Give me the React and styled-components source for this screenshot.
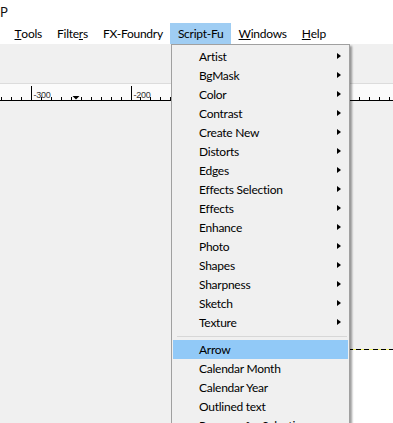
import styled, { createGlobalStyle } from 'styled-components'

const GlobalStyle = createGlobalStyle`
    html, body {
        margin: 0;
        padding: 0;
        background: #fff;
    }
    body {
        font-family: "Segoe UI", Lato, "Liberation Sans", sans-serif;
        font-size: 12px;
        letter-spacing: -0.25px;
        color: #000;
    }
`

const Window = styled.div`
    position: relative;
    width: 393px;
    height: 423px;
    overflow: hidden;
    display: flex;
    flex-direction: column;
`

const TitleBar = styled.div`
    height: 23px;
    display: flex;
    align-items: center;
    padding-top: 1px;
    box-sizing: border-box;
    font-size: 13px;
    color: #111;
`

const MenuBar = styled.div`
    height: 21px;
    display: flex;
    align-items: stretch;
    padding-left: 7px;
    background: #fff;
`

const MenuBarItem = styled.div`
    display: flex;
    align-items: center;
    padding: 0 7.5px;
    background: ${p => (p.$open ? '#9fcdf3' : 'transparent')};
`

const ToolStrip = styled.div`
    height: 39px;
    background: #f0f0f0;
`

const Ruler = styled.div`
    height: 16px;
    background: #fbfbfb;
    border-top: 1px solid #dcdcdc;
    border-bottom: 1px solid #000;

    svg {
        display: block;
    }
`

const Canvas = styled.div`
    flex: 1;
    display: flex;
    background: #f0f0f0;
    padding: 248px 0 0 300px;
`

const ImageArea = styled.div`
    flex: 1;
    background: #fff;
    border-top: 1px solid transparent;
    border-image: repeating-linear-gradient(90deg, #000 0 5px, #f4f46a 5px 8px) 1;
`

const Dropdown = styled.div`
    position: absolute;
    left: 171px;
    top: 44px;
    width: 179px;
    box-sizing: border-box;
    background: #f0f0f0;
    border: 1px solid #a0a0a0;
    padding: 2px 1px;
    box-shadow: 2px 2px 2px rgba(0, 0, 0, 0.38);
`

const Item = styled.div`
    position: relative;
    height: 19px;
    display: flex;
    align-items: center;
    padding-left: 26px;
    white-space: nowrap;
    background: ${p => (p.$hot ? '#91c9f7' : 'transparent')};
`

const SubArrow = styled.span`
    position: absolute;
    right: 7px;
    top: 6px;
    width: 0;
    height: 0;
    border-top: 3.5px solid transparent;
    border-bottom: 3.5px solid transparent;
    border-left: 4px solid #000;
`

const Separator = styled.div`
    height: 8px;
    display: flex;
    align-items: center;
    padding: 0 1px 0 4px;

    &::after {
        content: '';
        flex: 1;
        height: 1px;
        background: #d7d7d7;
    }
`

const menuBar = [
    { label: 'Tools', key: 0 },
    { label: 'Filters', key: 5 },
    { label: 'FX-Foundry', key: -1 },
    { label: 'Script-Fu', key: -1, open: true },
    { label: 'Windows', key: 0 },
    { label: 'Help', key: 0 },
]

const submenus = [
    'Artist', 'BgMask', 'Color', 'Contrast', 'Create New', 'Distorts', 'Edges',
    'Effects Selection', 'Effects', 'Enhance', 'Photo', 'Shapes', 'Sharpness',
    'Sketch', 'Texture',
]

const scripts = ['Arrow', 'Calendar Month', 'Calendar Year', 'Outlined text', 'Pressure for Selection']

function Mnemonic({ label, at }) {
    if (at < 0) return label
    return (
        <>
            {label.slice(0, at)}
            <u>{label[at]}</u>
            {label.slice(at + 1)}
        </>
    )
}

function RulerDrawing() {
    const toX = u => 31 + (u + 300) * 0.995
    const ticks = []
    for (let u = -330; u <= 60; u += 10) {
        const x = Math.round(toX(u)) + 0.5
        const major = u % 100 === 0
        ticks.push(<line key={u} x1={x} x2={x} y1={major ? 2 : 13} y2={16} stroke="#000" strokeWidth="1" />)
        if (major) {
            ticks.push(
                <text key={'t' + u} x={x + 2} y={14} fontSize="9" fontFamily="Liberation Sans, sans-serif" fill="#333">
                    {u}
                </text>
            )
        }
    }
    return (
        <svg width="393" height="16">
            {ticks}
            <polygon points="72.5,12 79.5,12 76,15.5" fill="#000" />
        </svg>
    )
}

export default function App() {
    return (
        <Window>
            <GlobalStyle />
            <TitleBar>P</TitleBar>
            <MenuBar>
                {menuBar.map(m => (
                    <MenuBarItem key={m.label} $open={m.open}>
                        <Mnemonic label={m.label} at={m.key} />
                    </MenuBarItem>
                ))}
            </MenuBar>
            <ToolStrip />
            <Ruler>
                <RulerDrawing />
            </Ruler>
            <Canvas>
                <ImageArea />
            </Canvas>
            <Dropdown>
                {submenus.map(s => (
                    <Item key={s}>
                        {s}
                        <SubArrow />
                    </Item>
                ))}
                <Separator />
                {scripts.map((s, i) => (
                    <Item key={s} $hot={i === 0}>{s}</Item>
                ))}
            </Dropdown>
        </Window>
    )
}
